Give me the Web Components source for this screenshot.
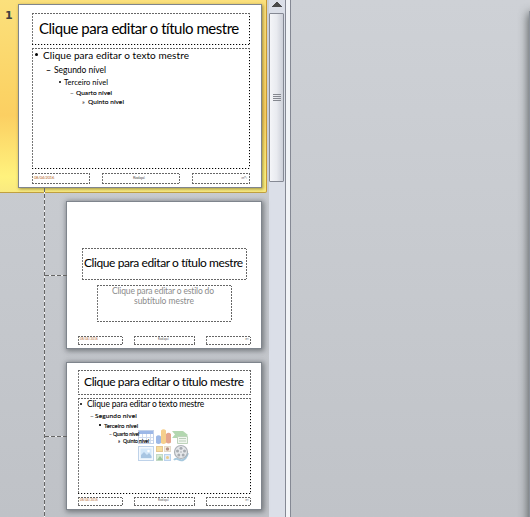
<!DOCTYPE html>
<html lang="pt"><head><meta charset="utf-8"><title>Slide master</title>
<style>
html,body{margin:0;height:517px;overflow:hidden}
body{font-family:Lato,"Open Sans","Liberation Sans",sans-serif;color:#000}
</style></head><body>
<master-app></master-app>
<script>
const define=(name,html,ready)=>{
  const t=document.createElement('template');t.innerHTML=html;
  customElements.define(name,class extends HTMLElement{
    constructor(){super();this.attachShadow({mode:'open'}).append(t.content.cloneNode(true))}
    connectedCallback(){ready&&ready(this)}
  });
};

/* One line of text, tracked so that it spans the width in "w" */
define('fit-line',`<style>
:host{display:block;position:absolute;white-space:pre;line-height:1}
span{display:inline-block}
</style><span><slot></slot></span>`,el=>{
  const [x,base,w,size]=['x','base','w','size'].map(a=>+el.getAttribute(a));
  el.style.fontSize=size+'px';el.style.left=x+'px';
  el.style.top=(base-size*.9+1)+'px';
  const s=el.shadowRoot.querySelector('span');
  const n=el.textContent.length;
  const nat=s.getBoundingClientRect().width;
  s.style.letterSpacing=((w-nat)/n)+'px';
});

/* Small round list bullet */
define('list-dot',`<style>
:host{display:block;position:absolute;border-radius:50%;background:#000}
</style>`,el=>{
  const [x,y,d]=el.getAttribute('at').split(' ');
  Object.assign(el.style,{left:x+'px',top:y+'px',width:d+'px',height:d+'px'});
});

/* Dotted placeholder frame; "strong" gives sparse black dots below and right */
define('place-holder',`<style>
:host{--e:#666 0 2px,#fff 2px 3px;--f:var(--e);display:block;position:absolute;box-sizing:border-box;
background:
repeating-linear-gradient(90deg,var(--e)) 0 0/100% 1px no-repeat,
repeating-linear-gradient(90deg,var(--f)) 0 100%/100% 1px no-repeat,
repeating-linear-gradient(#777 0 2px,#fff 2px 3px) 0 0/1px 100% no-repeat,
repeating-linear-gradient(var(--f)) 100% 0/1px 100% no-repeat}
:host([strong]){--f:#000 0 1px,#ccc 1px 2px,#fff 2px 3px}
</style>`,el=>{
  const [x,y,w,h]=el.getAttribute('box').split(' ');
  Object.assign(el.style,{left:x+'px',top:y+'px',width:w+'px',height:h+'px'});
});

define('slide-thumb',`<style>
:host{display:block;position:relative;box-sizing:border-box;flex:none;background:#fff;
box-shadow:inset 0 0 0 1px #7f858d,1px 1px 5px 1px rgba(40,45,50,.5)}
</style><slot></slot>`);

define('content-icons',`<style>
:host{display:block;position:absolute;left:72px;top:67px;width:52px;height:34px;opacity:.6}
svg{display:block}</style>
<svg width="52" height="34" viewBox="0 0 52 34">
<g><rect x=".5" y="1.5" width="15" height="13" fill="#fff" stroke="#9bb3dc"/><rect x="1" y="2" width="14" height="3" fill="#5d8ad8"/>
<path d="M1 8.5h14M1 11.5h14M4.5 5v9M8.5 5v9M12.5 5v9" stroke="#b4c5e4"/></g>
<g><path d="M18 7.500q2.500-2.500 5 0V14q-2.500 2-5 0z" fill="#5f8cd6"/><path d="M23 1.500q2.500-2.500 5 0V14q-2.500 2-5 0z" fill="#f0b040"/><path d="M28 5q2.500-2.500 5 0v8.500q-2.500 2-5 0z" fill="#d46a42"/></g>
<path d="M34 2h11l5 4-3.500 3H34l3-3.500z" fill="#82bd7c"/><path d="M39.500 7.500h10v7h-10z" fill="#e8f1e5" stroke="#93b88e"/><path d="M41 9.500h7M41 12h7" stroke="#8dad8b"/>
<g><rect x=".5" y="17.500" width="15" height="14" fill="#edf4fc" stroke="#93b5dc"/><rect x="2.500" y="19.500" width="11" height="10" fill="#b9d9f7"/><path d="M3 29v-3l3-3 3 3 2-2 2.500 3v2z" fill="#6f9fd0"/><circle cx="10.500" cy="22" r="1.300" fill="#fff"/></g>
<g><rect x="18.500" y="17.500" width="6" height="5" fill="#f3c75b" stroke="#d7a14a"/><rect x="26.500" y="17.500" width="6" height="5" fill="#efe3cf" stroke="#d1c3a6"/><circle cx="29.500" cy="20" r="1.700" fill="#8a4938"/><rect x="18.500" y="25.500" width="6" height="6" fill="#c0dfb8" stroke="#9ac1a2"/><path d="M19 31l3-4 3 4z" fill="#5ea35b"/><rect x="26.500" y="25.500" width="6" height="6" fill="#cde0f6" stroke="#8db5e2"/><circle cx="29.500" cy="28.500" r="1.500" fill="#e0a93a"/></g>
<path d="M36 31c3-4 5 2 9 0s3-3 5-7" fill="none" stroke="#6ca4c8" stroke-width="2"/><circle cx="43" cy="23" r="6.500" fill="#d6dade" stroke="#777f88" stroke-width="1.200"/><g fill="#6d757e"><circle cx="43" cy="19.300" r="1.500"/><circle cx="46.500" cy="22" r="1.500"/><circle cx="45.200" cy="26" r="1.500"/><circle cx="40.800" cy="26" r="1.500"/><circle cx="39.500" cy="22" r="1.500"/><circle cx="43" cy="23" r=".8"/></g>
</svg>`);

define('tree-lines',`<style>
:host{display:block;position:absolute;left:44px;top:188px;width:23px;height:329px;
--h:repeating-linear-gradient(90deg,#666 0 4px,#eee 4px 6px);
background:var(--h) 1px 87px/22px 1px no-repeat,var(--h) 1px 248px/22px 1px no-repeat,
repeating-linear-gradient(#666 0 4px,#f4f4f4 4px 6px) 0 0/1px 100% no-repeat}
</style>`);

define('slide-panel',`<style>
:host{display:flex;flex-direction:column;align-items:flex-end;position:relative;width:269px;height:517px;box-sizing:border-box;
background:linear-gradient(#cdd0d5,#bfc2c7)}
.sel{display:flex;justify-content:space-between;box-sizing:border-box;width:267px;height:193px;margin-right:2px;padding:4px 4px 0 5px;
border-right:1px solid #c79a35;border-bottom:1px solid #c0a040;border-bottom-right-radius:2px;
background:linear-gradient(#fbe07c,#fbd365 48%,#fbcf62 60%,#fff27d 92%,#f9ea80)}
.num{font:bold 11px/14px "DejaVu Sans","Open Sans",sans-serif;color:#404040;padding-top:5px}
.big{width:244px;height:184px;box-shadow:inset 0 0 0 1px #7f858d,1px 1px 3px rgba(90,80,20,.6)}
.small{width:196px;height:148px;margin-right:7px}
.s2{margin-top:8px}.s3{margin-top:13px}
.b{-webkit-text-stroke:.12px #000}
.g{color:#8b8b8b}.d{color:#b5651d}.f{color:#555}
</style>
<div class="sel"><span class="num">1</span>
<slide-thumb class="big">
<place-holder box="14 9 218 32" strong></place-holder><place-holder box="14 44 218 121" strong></place-holder>
<place-holder box="14 169 58 11"></place-holder><place-holder box="84 169 78 11"></place-holder><place-holder box="174 169 58 11"></place-holder>
<fit-line x="21" base="29.500" w="200" size="15">Clique para editar o título mestre</fit-line>
<list-dot at="17 49 3"></list-dot><fit-line x="25" base="54" w="146" size="10">Clique para editar o texto mestre</fit-line>
<fit-line class="b" x="28" base="69" w="6" size="8.500">–</fit-line><fit-line x="36" base="69" w="52" size="8.500">Segundo nível</fit-line>
<list-dot at="41 77 2"></list-dot><fit-line x="46" base="81" w="44" size="7.500">Terceiro nível</fit-line>
<fit-line class="b" x="52" base="91" w="5" size="6.500">–</fit-line><fit-line class="b" x="58" base="91" w="36" size="6.500">Quarto nível</fit-line>
<fit-line x="64" base="100" w="4" size="6.500">»</fit-line><fit-line class="b" x="70" base="100" w="36" size="6.500">Quinto nível</fit-line>
<fit-line class="d" x="16" base="175" w="20" size="4">08/04/2016</fit-line><fit-line class="f" x="115" base="175" w="12" size="4">Rodapé</fit-line><fit-line class="f" x="223" base="175" w="6" size="4">‹nº›</fit-line>
</slide-thumb></div>
<slide-thumb class="small s2">
<place-holder box="16 47 165 32"></place-holder><place-holder box="31 84 135 37"></place-holder>
<place-holder box="12 135 45 9"></place-holder><place-holder box="68 135 61 9"></place-holder><place-holder box="140 135 45 9"></place-holder>
<fit-line x="18" base="66" w="159" size="12">Clique para editar o título mestre</fit-line>
<fit-line class="g" x="46" base="93" w="102" size="8.500">Clique para editar o estilo do</fit-line>
<fit-line class="g" x="68" base="103" w="60" size="8.500">subtítulo mestre</fit-line>
<fit-line class="d" x="14" base="139" w="18" size="3">08/04/2016</fit-line><fit-line class="f" x="92" base="139" w="11" size="3">Rodapé</fit-line><fit-line class="f" x="179" base="139" w="4" size="3">‹nº›</fit-line>
</slide-thumb>
<slide-thumb class="small s3">
<place-holder box="12 8 173 25"></place-holder><place-holder box="12 36 173 96" strong></place-holder>
<place-holder box="12 135 45 9"></place-holder><place-holder box="68 135 61 9"></place-holder><place-holder box="140 135 45 9"></place-holder>
<content-icons></content-icons>
<fit-line x="18" base="24" w="160" size="12">Clique para editar o título mestre</fit-line>
<list-dot at="14 41 2"></list-dot><fit-line x="21" base="45" w="117" size="8.500">Clique para editar o texto mestre</fit-line>
<fit-line class="b" x="24" base="56" w="5" size="6.500">–</fit-line><fit-line class="b" x="29" base="56" w="42" size="6.500">Segundo nível</fit-line>
<list-dot at="33 62 1.500"></list-dot><fit-line class="b" x="38" base="65" w="34" size="6">Terceiro nível</fit-line>
<fit-line class="b" x="43" base="73" w="4" size="5">–</fit-line><fit-line class="b" x="47" base="73" w="26" size="5">Quarto nível</fit-line>
<fit-line class="b" x="52" base="80" w="3" size="5">»</fit-line><fit-line class="b" x="57" base="80" w="26" size="5">Quinto nível</fit-line>
<fit-line class="d" x="14" base="139" w="18" size="3">08/04/2016</fit-line><fit-line class="f" x="92" base="139" w="11" size="3">Rodapé</fit-line><fit-line class="f" x="179" base="139" w="4" size="3">‹nº›</fit-line>
</slide-thumb>
<tree-lines></tree-lines>`);

define('scroll-bar',`<style>
:host{display:flex;flex-direction:column;align-items:flex-start;width:16px;height:517px;background:#dbdfe8}
svg{display:block;height:13px;width:16px}
.thumb{box-sizing:border-box;width:15px;height:169px;border:1px solid #858994;border-radius:1px;
background:linear-gradient(90deg,#f4f5f8,#e9ebf0 50%,#cdd0d9);display:grid;place-content:center;gap:1px}
i{display:block;width:8px;height:1px;background:#858890}
</style><svg viewBox="0 0 16 13" shape-rendering="crispEdges"><path d="M7 2h2v1h1v1h1v1h1v1h1v1H3V6h1V5h1V4h1V3h1z" fill="#4a4a4a"/></svg>
<div class="thumb"><i></i><i></i><i></i><i></i></div>`);

define('edit-area',`<style>
:host{display:flex;justify-content:flex-end;align-items:flex-end;flex:1;height:517px;overflow:hidden;background:linear-gradient(#ced1d6,#c0c3c8)}
.page{width:20px;height:526px;margin:0 -19px -20px 0;flex:none;background:#8b919a;box-shadow:0 3px 10px 1px rgba(60,66,66,.8)}
</style><div class="page"></div>`);

define('master-app',`<style>
:host{display:flex;width:530px;height:517px;overflow:hidden}
.split{box-sizing:border-box;width:6px;height:517px;background:#f1f3f6;border-left:1px solid #858994;border-right:1px solid #858994}
</style><slide-panel></slide-panel><scroll-bar></scroll-bar><div class="split"></div><edit-area></edit-area>`);
</script></body></html>
